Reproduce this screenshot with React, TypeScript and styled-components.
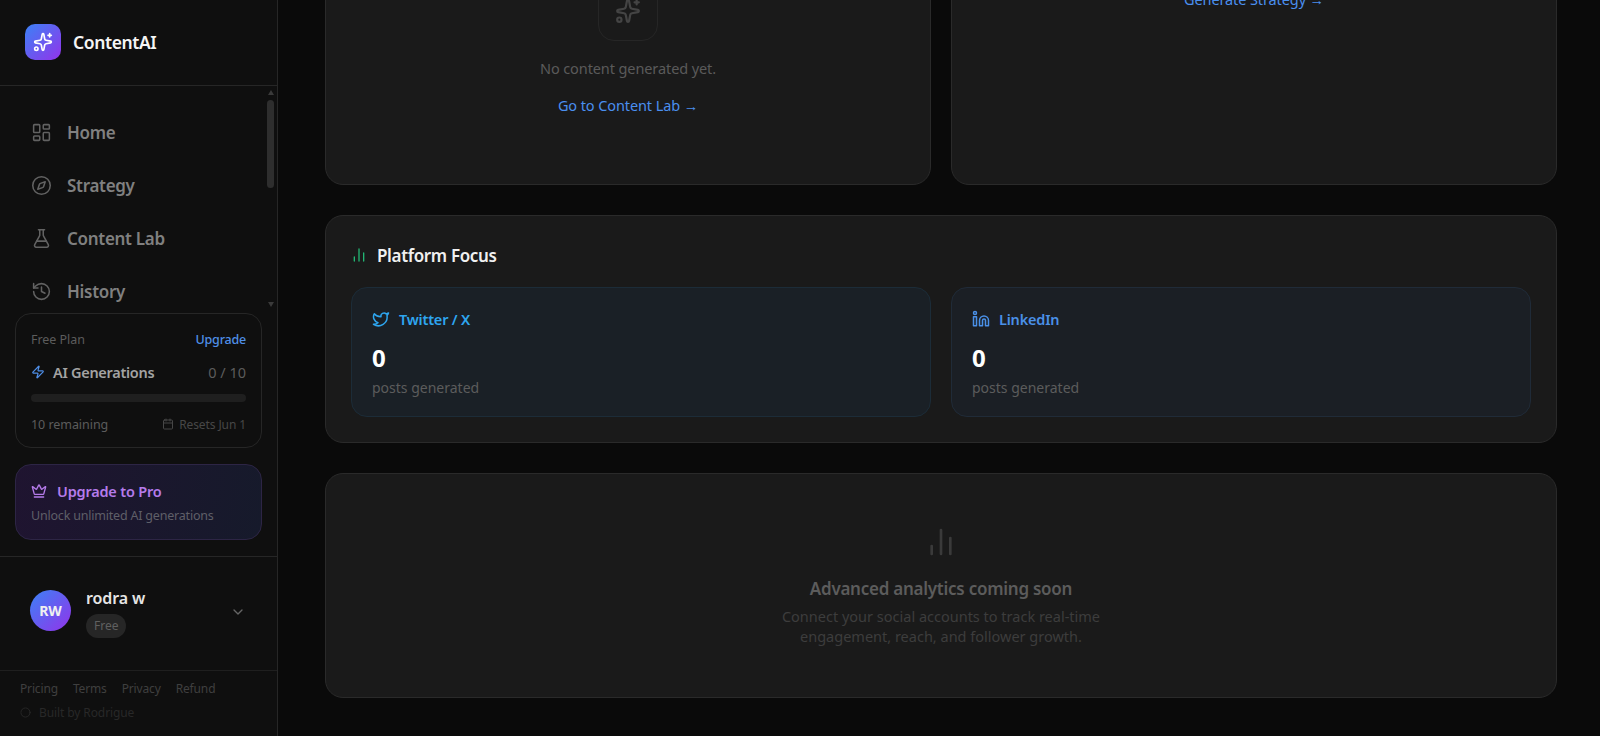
import React from 'react';
import styled, { createGlobalStyle } from 'styled-components';
import {
  Calendar,
  ChartNoAxesColumn,
  ChevronDown,
  Circle,
  Compass,
  Crown,
  FlaskConical,
  History,
  LayoutDashboard,
  Linkedin,
  Sparkles,
  Twitter,
  Zap,
} from 'lucide-react';

const GlobalStyle = createGlobalStyle`
  html, body {
    margin: 0;
    height: 100%;
    overflow: hidden;
    background: #0a0a0a;
    font-family: "Noto Sans", "Open Sans", sans-serif;
  }
  * { box-sizing: border-box; }
`;

const Shell = styled.div`
  display: flex;
  height: 736px;
  overflow: hidden;
`;

const Sidebar = styled.aside`
  flex: 0 0 278px;
  display: flex;
  flex-direction: column;
  background: #0f0f0f;
  border-right: 1px solid #262626;
`;

const Brand = styled.div`
  height: 86px;
  flex: none;
  display: flex;
  align-items: center;
  gap: 12px;
  padding: 0 25px 2px;
  border-bottom: 1px solid #262626;
`;

const LogoMark = styled.div`
  width: 36px;
  height: 36px;
  border-radius: 10px;
  display: flex;
  align-items: center;
  justify-content: center;
  color: #fff;
  background: linear-gradient(135deg, #3b82f6, #9333ea);
`;

const BrandName = styled.span`
  font-size: 17.5px;
  font-weight: 600;
  letter-spacing: -0.4px;
  color: #f5f5f5;
`;

const NavArea = styled.div`
  position: relative;
  height: 222px;
  flex: none;
  padding-top: 20px;
  overflow: hidden;
`;

const NavItem = styled.a`
  display: flex;
  align-items: center;
  gap: 15px;
  height: 53px;
  padding-left: 31px;
  font-size: 17px;
  font-weight: 600;
  letter-spacing: -0.3px;
  color: #808080;
  svg { color: #626262; }
`;

const ScrollThumb = styled.div`
  position: absolute;
  top: 14px;
  right: 3px;
  width: 7px;
  height: 88px;
  border-radius: 4px;
  background: #2e2e2e;
`;

const ScrollArrow = styled.div<{ $down?: boolean }>`
  position: absolute;
  right: 3px;
  ${(p) => (p.$down ? 'bottom: 1px;' : 'top: 4px;')}
  width: 0;
  height: 0;
  border-left: 3.5px solid transparent;
  border-right: 3.5px solid transparent;
  ${(p) => (p.$down ? 'border-top: 5px solid #3a3a3a;' : 'border-bottom: 5px solid #3a3a3a;')}
`;

const PlanStack = styled.div`
  display: flex;
  flex-direction: column;
  gap: 16px;
  padding: 5px 15px 16px;
  border-bottom: 1px solid #262626;
`;

const PlanCard = styled.div`
  height: 135px;
  padding: 14px 15px 0;
  border: 1px solid #262626;
  border-radius: 16px;
  background: #0f0f0f;
`;

const SpacedRow = styled.div<{ $h: number; $top?: number }>`
  display: flex;
  align-items: center;
  justify-content: space-between;
  height: ${(p) => p.$h}px;
  margin-top: ${(p) => p.$top ?? 0}px;
`;

const Muted = styled.span`
  font-size: 12.5px;
  letter-spacing: -0.05px;
  color: #5c5c5c;
`;

const Faint = styled(Muted)`
  display: inline-flex;
  align-items: center;
  gap: 5px;
  font-size: 12px;
  letter-spacing: -0.1px;
  color: #474747;
`;

const UpgradeLink = styled.a`
  font-size: 12.5px;
  letter-spacing: -0.2px;
  font-weight: 500;
  color: #4f8fe8;
`;

const GenLabel = styled.span`
  display: inline-flex;
  align-items: center;
  gap: 8px;
  font-size: 14.5px;
  font-weight: 600;
  letter-spacing: -0.3px;
  color: #a3a3a3;
`;

const GenCount = styled.span`
  font-size: 14.5px;
  color: #5c5c5c;
`;

const Progress = styled.div`
  height: 8px;
  margin: 11px 0 9px;
  border-radius: 4px;
  background: #1f1f1f;
`;

const ProCard = styled.div`
  height: 76px;
  padding: 14px 15px 0;
  border: 1px solid #2d2545;
  border-radius: 16px;
  background: linear-gradient(100deg, #1f1430, #161a2b);
`;

const ProTitle = styled.div`
  display: flex;
  align-items: center;
  gap: 10px;
  height: 24px;
  font-size: 14.5px;
  font-weight: 600;
  letter-spacing: -0.2px;
  color: #b57bea;
`;

const ProNote = styled.div`
  margin-top: 4px;
  font-size: 12.5px;
  letter-spacing: -0.2px;
  color: #5f5f68;
`;

const UserRow = styled.div`
  height: 114px;
  flex: none;
  display: flex;
  align-items: center;
  gap: 15px;
  padding: 0 31px 3px 30px;
  border-bottom: 1px solid #1f1f1f;
`;

const Avatar = styled.div`
  width: 41px;
  height: 41px;
  flex: none;
  margin-bottom: 4px;
  border-radius: 50%;
  display: flex;
  align-items: center;
  justify-content: center;
  font-size: 14px;
  font-weight: 700;
  color: #f0f0f0;
  background: linear-gradient(135deg, #3b82f6, #9333ea);
`;

const UserInfo = styled.div`
  flex: 1;
  display: flex;
  flex-direction: column;
  align-items: flex-start;
  gap: 5px;
`;

const UserName = styled.span`
  font-size: 16px;
  font-weight: 600;
  letter-spacing: -0.1px;
  line-height: 22px;
  color: #e5e5e5;
`;

const PlanBadge = styled.span`
  display: inline-flex;
  align-items: center;
  height: 24px;
  padding: 0 8px;
  border-radius: 12px;
  font-size: 12px;
  color: #606060;
  background: #262626;
`;

const Footer = styled.footer`
  padding: 9px 20px 0;
`;

const FooterLinks = styled.div`
  display: flex;
  gap: 15px;
  height: 16px;
  align-items: center;
  font-size: 12px;
  letter-spacing: -0.15px;
  color: #3f3f3f;
`;

const BuiltBy = styled.div`
  display: flex;
  align-items: center;
  gap: 8px;
  height: 16px;
  margin-top: 8px;
  font-size: 12px;
  letter-spacing: -0.1px;
  color: #282828;
`;

const Main = styled.main`
  flex: 1;
  padding: 0 43px 0 47px;
  overflow: hidden;
  background: #0a0a0a;
`;

// page is scrolled down, the top of the first row sits above the fold
const ScrollContent = styled.div`
  margin-top: -136px;
  display: flex;
  flex-direction: column;
  gap: 30px;
`;

const TwoCols = styled.div`
  display: grid;
  grid-template-columns: 1fr 1fr;
  gap: 20px;
`;

const Card = styled.section`
  border: 1px solid #2a2a2a;
  border-radius: 18px;
  background: #1a1a1a;
`;

const EmptyCard = styled(Card)<{ $top: number }>`
  height: 321px;
  display: flex;
  flex-direction: column;
  align-items: center;
  padding-top: ${(p) => p.$top}px;
`;

const IconBox = styled.div`
  width: 60px;
  height: 60px;
  flex: none;
  border: 1px solid #262626;
  border-radius: 16px;
  display: flex;
  align-items: center;
  justify-content: center;
  color: #444;
`;

const EmptyText = styled.p`
  margin: 16px 0 0;
  font-size: 14.5px;
  line-height: 22px;
  letter-spacing: -0.1px;
  color: #5a5a5a;
`;

const CardLink = styled.a`
  margin-top: 15px;
  font-size: 14.5px;
  line-height: 22px;
  letter-spacing: -0.1px;
  color: #4a8fef;
`;

const FocusCard = styled(Card)`
  height: 228px;
  padding: 26px 25px 0;
`;

const FocusTitle = styled.h2`
  display: flex;
  align-items: center;
  gap: 10px;
  height: 26px;
  margin: 0 0 19px;
  font-size: 17px;
  font-weight: 600;
  letter-spacing: -0.35px;
  color: #f0f0f0;
  svg { color: #22b573; }
`;

const PlatformCard = styled.div<{ $bg: string; $line: string }>`
  height: 130px;
  padding: 20px 20px 0;
  border: 1px solid ${(p) => p.$line};
  border-radius: 16px;
  background: ${(p) => p.$bg};
`;

const PlatformName = styled.div<{ $color: string }>`
  display: flex;
  align-items: center;
  gap: 9px;
  height: 22px;
  font-size: 14.5px;
  font-weight: 600;
  letter-spacing: -0.2px;
  color: ${(p) => p.$color};
`;

const Count = styled.div`
  margin-top: 12px;
  font-size: 24px;
  font-weight: 700;
  line-height: 32px;
  color: #fff;
`;

const CountNote = styled.div`
  margin-top: 3px;
  font-size: 14px;
  line-height: 22px;
  color: #5c5c5c;
`;

const SoonCard = styled(Card)`
  height: 225px;
  display: flex;
  flex-direction: column;
  align-items: center;
  padding-top: 52px;
  color: #3a3a3a;
`;

const SoonTitle = styled.h3`
  margin: 19px 0 5px;
  font-size: 17px;
  font-weight: 600;
  line-height: 24px;
  letter-spacing: -0.25px;
  color: #5c5c5c;
`;

const SoonText = styled.p`
  margin: 0;
  width: 340px;
  text-align: center;
  font-size: 14.5px;
  line-height: 20px;
  color: #3d3d3d;
`;

const navItems = [
  { label: 'Home', icon: LayoutDashboard },
  { label: 'Strategy', icon: Compass },
  { label: 'Content Lab', icon: FlaskConical },
  { label: 'History', icon: History },
];

const platforms = [
  { name: 'Twitter / X', icon: Twitter, color: '#2ea6f0', bg: '#1a2026', line: '#1c2c38' },
  { name: 'LinkedIn', icon: Linkedin, color: '#4a90e8', bg: '#1b1f25', line: '#202b38' },
];

export default function App() {
  return (
    <Shell>
      <GlobalStyle />
      <Sidebar>
        <Brand>
          <LogoMark>
            <Sparkles size={20} />
          </LogoMark>
          <BrandName>ContentAI</BrandName>
        </Brand>
        <NavArea>
          {navItems.map((item) => (
            <NavItem key={item.label}>
              <item.icon size={21} strokeWidth={1.75} />
              {item.label}
            </NavItem>
          ))}
          <ScrollArrow />
          <ScrollThumb />
          <ScrollArrow $down />
        </NavArea>
        <PlanStack>
          <PlanCard>
            <SpacedRow $h={22}>
              <Muted>Free Plan</Muted>
              <UpgradeLink>Upgrade</UpgradeLink>
            </SpacedRow>
            <SpacedRow $h={22} $top={11}>
              <GenLabel>
                <Zap size={14} color="#4f8fe8" />
                AI Generations
              </GenLabel>
              <GenCount>0 / 10</GenCount>
            </SpacedRow>
            <Progress />
            <SpacedRow $h={26}>
              <Muted>10 remaining</Muted>
              <Faint>
                <Calendar size={12} />
                Resets Jun 1
              </Faint>
            </SpacedRow>
          </PlanCard>
          <ProCard>
            <ProTitle>
              <Crown size={16} />
              Upgrade to Pro
            </ProTitle>
            <ProNote>Unlock unlimited AI generations</ProNote>
          </ProCard>
        </PlanStack>
        <UserRow>
          <Avatar>RW</Avatar>
          <UserInfo>
            <UserName>rodra w</UserName>
            <PlanBadge>Free</PlanBadge>
          </UserInfo>
          <ChevronDown size={16} color="#666" />
        </UserRow>
        <Footer>
          <FooterLinks>
            <span>Pricing</span>
            <span>Terms</span>
            <span>Privacy</span>
            <span>Refund</span>
          </FooterLinks>
          <BuiltBy>
            <Circle size={11} />
            Built by Rodrigue
          </BuiltBy>
        </Footer>
      </Sidebar>
      <Main>
        <ScrollContent>
          <TwoCols>
            <EmptyCard $top={116}>
              <IconBox>
                <Sparkles size={26} />
              </IconBox>
              <EmptyText>No content generated yet.</EmptyText>
              <CardLink>Go to Content Lab →</CardLink>
            </EmptyCard>
            <EmptyCard $top={10}>
              <IconBox>
                <Compass size={26} />
              </IconBox>
              <EmptyText>No strategy created yet.</EmptyText>
              <CardLink>Generate Strategy →</CardLink>
            </EmptyCard>
          </TwoCols>
          <FocusCard>
            <FocusTitle>
              <ChartNoAxesColumn size={16} />
              Platform Focus
            </FocusTitle>
            <TwoCols>
              {platforms.map((p) => (
                <PlatformCard key={p.name} $bg={p.bg} $line={p.line}>
                  <PlatformName $color={p.color}>
                    <p.icon size={18} />
                    {p.name}
                  </PlatformName>
                  <Count>0</Count>
                  <CountNote>posts generated</CountNote>
                </PlatformCard>
              ))}
            </TwoCols>
          </FocusCard>
          <SoonCard>
            <ChartNoAxesColumn size={32} />
            <SoonTitle>Advanced analytics coming soon</SoonTitle>
            <SoonText>Connect your social accounts to track real-time engagement, reach, and follower growth.</SoonText>
          </SoonCard>
        </ScrollContent>
      </Main>
    </Shell>
  );
}
